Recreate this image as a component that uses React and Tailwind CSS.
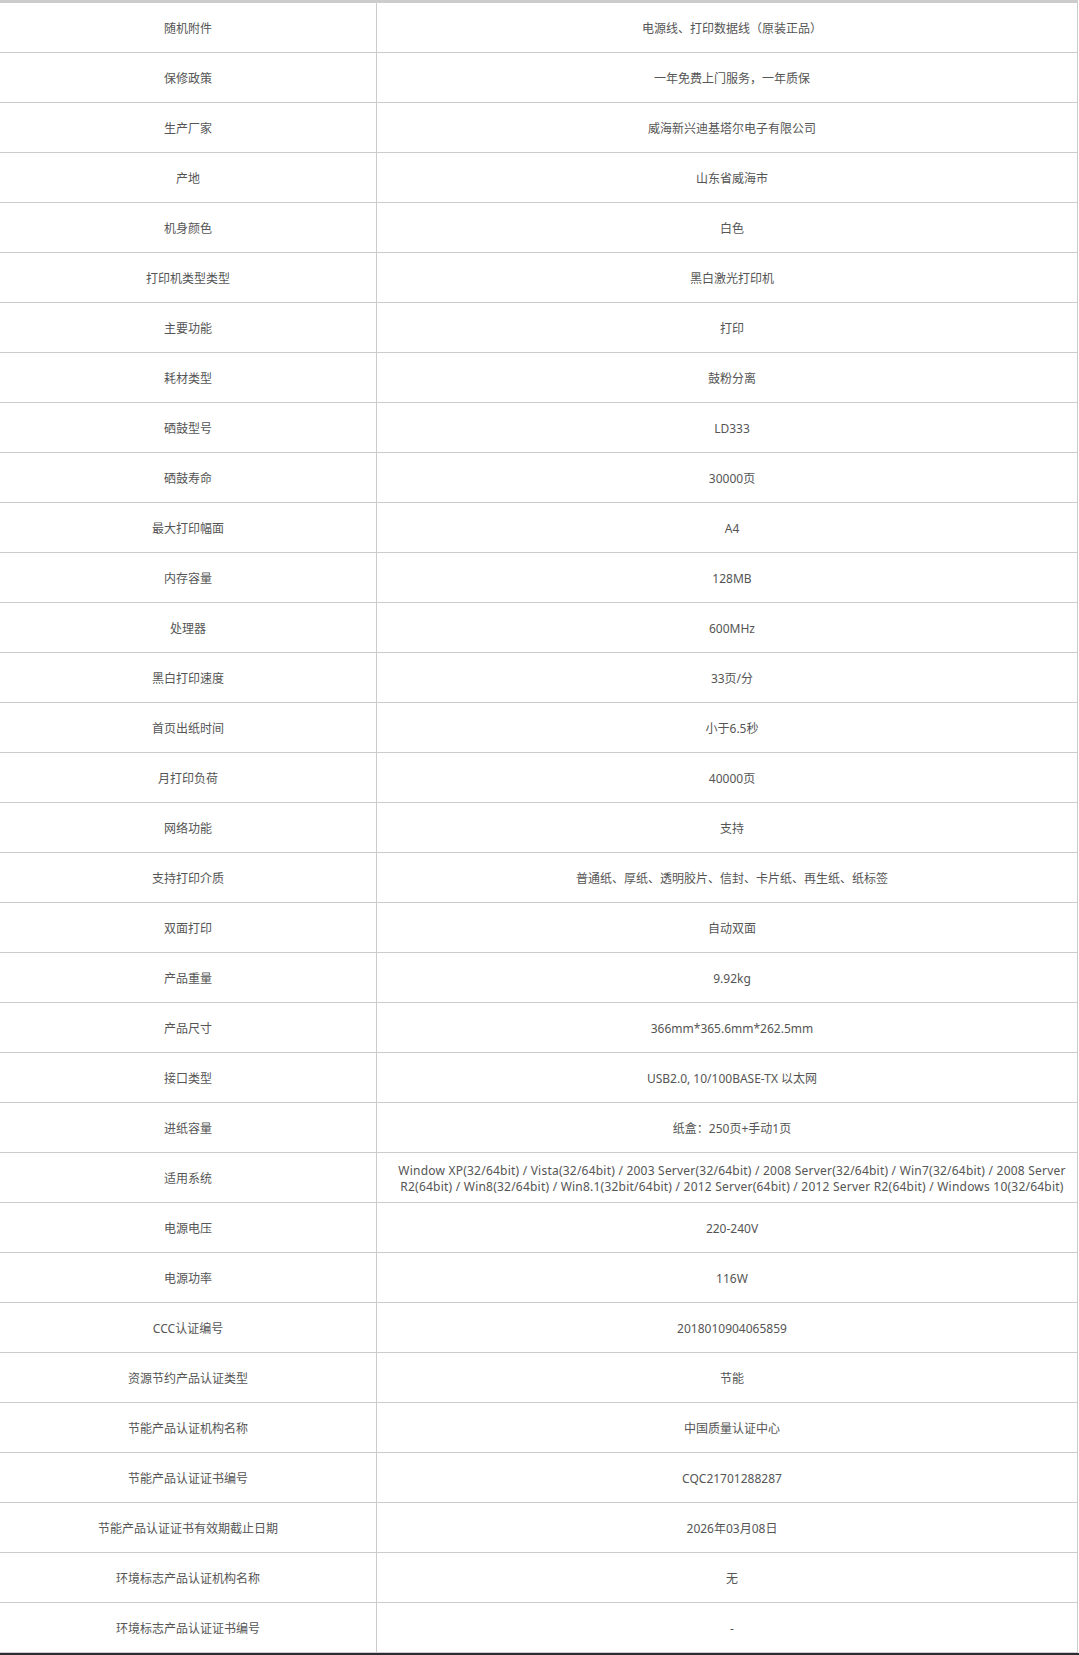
const specs = [
  ["随机附件", "电源线、打印数据线（原装正品）"],
  ["保修政策", "一年免费上门服务，一年质保"],
  ["生产厂家", "威海新兴迪基塔尔电子有限公司"],
  ["产地", "山东省威海市"],
  ["机身颜色", "白色"],
  ["打印机类型类型", "黑白激光打印机"],
  ["主要功能", "打印"],
  ["耗材类型", "鼓粉分离"],
  ["硒鼓型号", "LD333"],
  ["硒鼓寿命", "30000页"],
  ["最大打印幅面", "A4"],
  ["内存容量", "128MB"],
  ["处理器", "600MHz"],
  ["黑白打印速度", "33页/分"],
  ["首页出纸时间", "小于6.5秒"],
  ["月打印负荷", "40000页"],
  ["网络功能", "支持"],
  ["支持打印介质", "普通纸、厚纸、透明胶片、信封、卡片纸、再生纸、纸标签"],
  ["双面打印", "自动双面"],
  ["产品重量", "9.92kg"],
  ["产品尺寸", "366mm*365.6mm*262.5mm"],
  ["接口类型", "USB2.0, 10/100BASE-TX 以太网"],
  ["进纸容量", "纸盒：250页+手动1页"],
  [
    "适用系统",
    // 两行系统列表，字距稍微放宽一点
    <span className="tracking-[0.22px]">
      Window XP(32/64bit) / Vista(32/64bit) / 2003 Server(32/64bit) / 2008 Server(32/64bit) / Win7(32/64bit) / 2008 Server
      <br />
      R2(64bit) / Win8(32/64bit) / Win8.1(32bit/64bit) / 2012 Server(64bit) / 2012 Server R2(64bit) / Windows 10(32/64bit)
    </span>,
  ],
  ["电源电压", "220-240V"],
  ["电源功率", "116W"],
  ["CCC认证编号", "2018010904065859"],
  ["资源节约产品认证类型", "节能"],
  ["节能产品认证机构名称", "中国质量认证中心"],
  ["节能产品认证证书编号", "CQC21701288287"],
  ["节能产品认证证书有效期截止日期", "2026年03月08日"],
  ["环境标志产品认证机构名称", "无"],
  ["环境标志产品认证证书编号", "-"],
];

export default function App() {
  return (
    <div className="w-[1079px] bg-white font-['Microsoft_YaHei','Noto_Sans','Noto_Sans_CJK_SC',sans-serif] text-[12px] text-[#555]">
      {/* 参数表 */}
      <div className="w-[1078px] border-t-[3px] border-r border-[#cccccc]">
        {specs.map(([label, value], i) => (
          <div
            key={i}
            className="grid h-[50px] grid-cols-[377px_1fr] border-b border-[#cccccc]"
          >
            <div className="flex items-center justify-center border-r border-[#cccccc] pt-[2px] text-center">
              {label}
            </div>
            <div className="flex items-center justify-center pt-[2px] pl-[10px] text-center leading-[16px] whitespace-nowrap">
              <div>{value}</div>
            </div>
          </div>
        ))}
      </div>
      <div className="h-[2px] bg-[#2a2d31]" />
    </div>
  );
}
